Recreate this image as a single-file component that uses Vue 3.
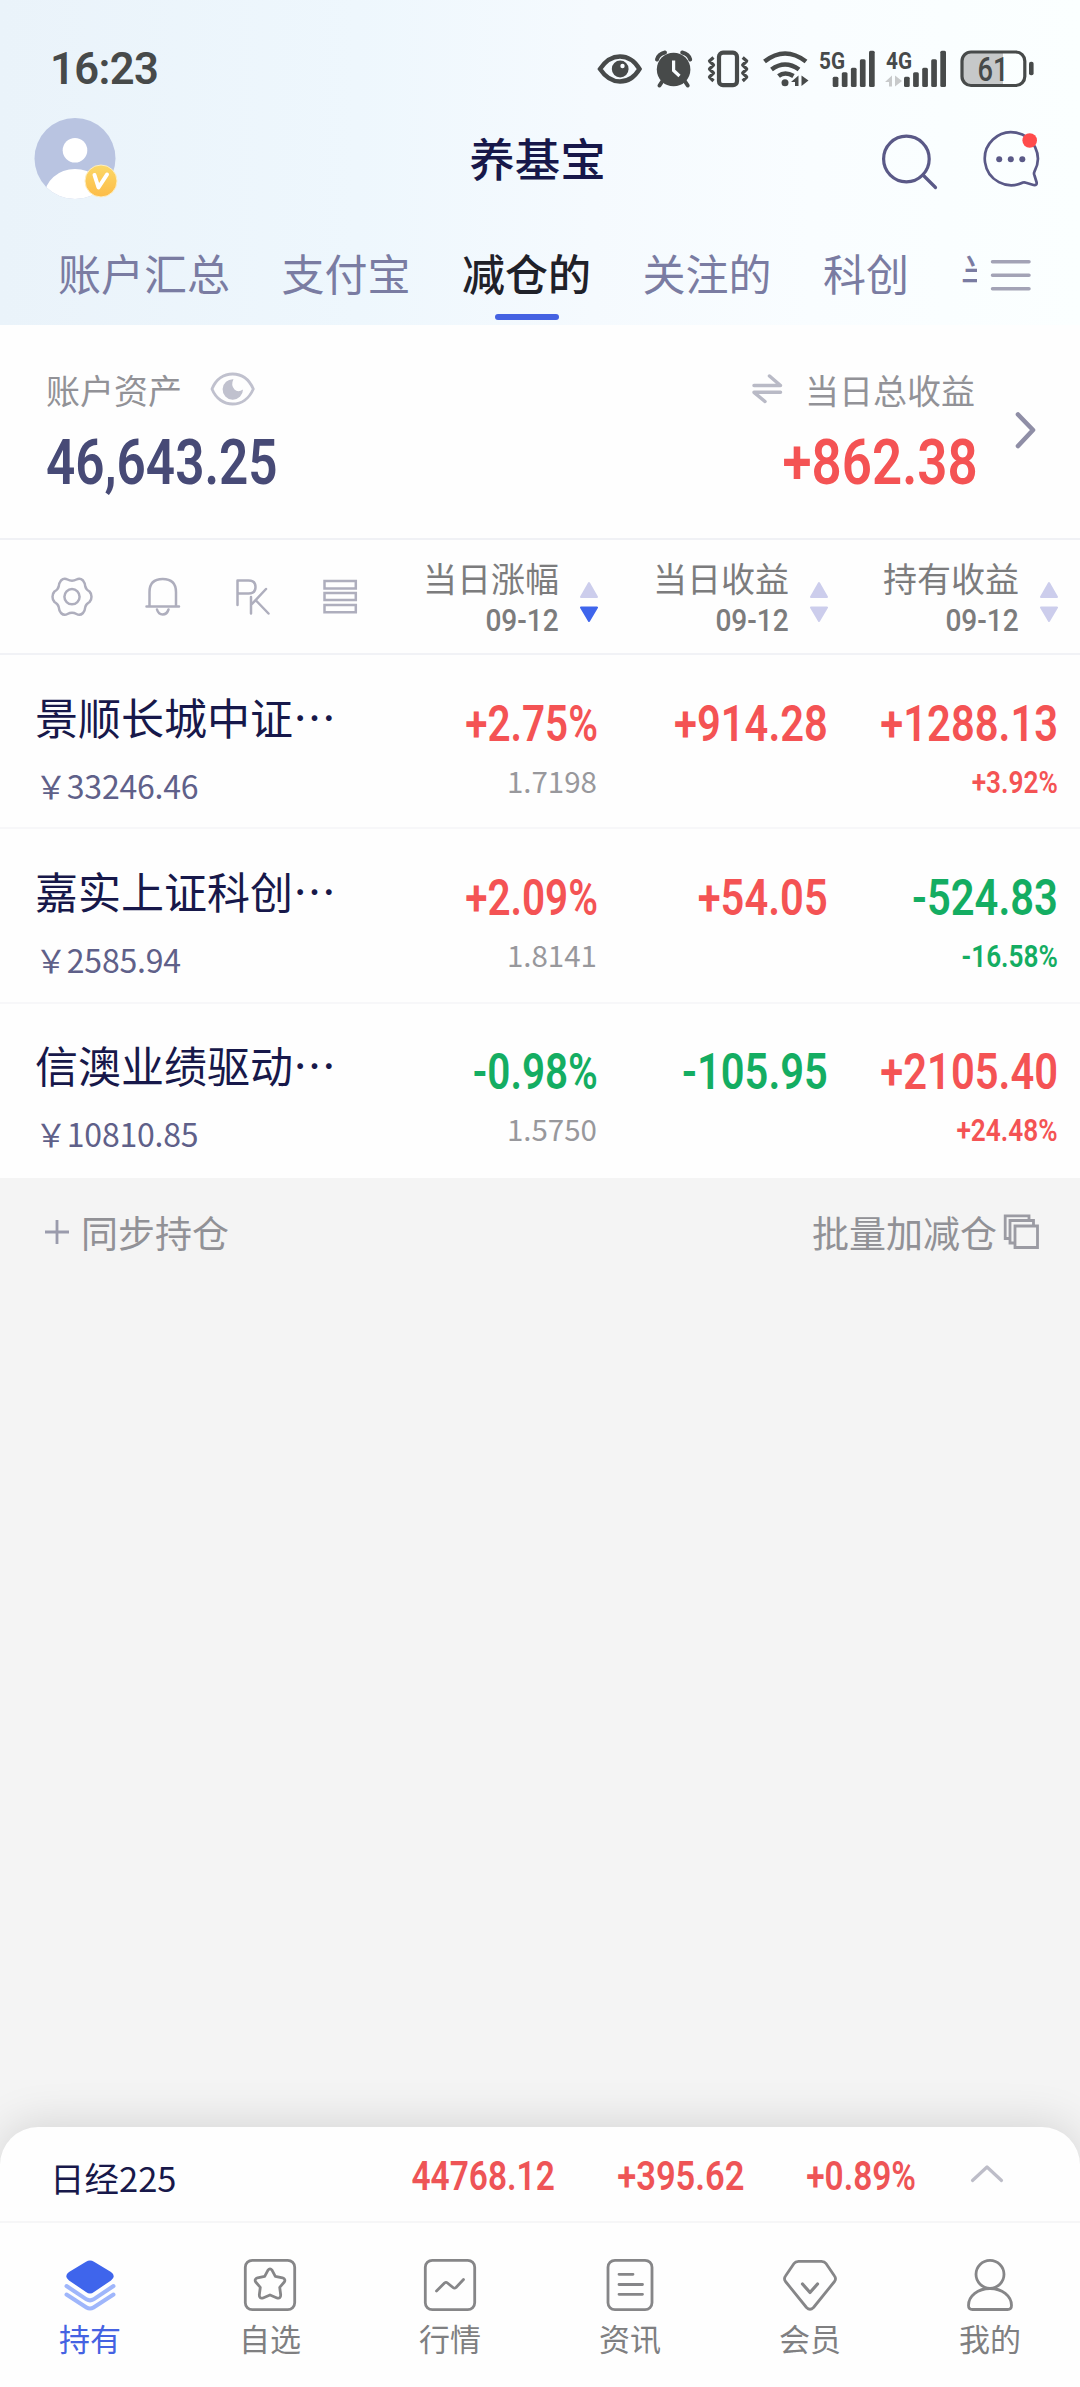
<script setup>
const tabs = ['账户汇总', '支付宝', '减仓的', '关注的', '科创', '半导体']
const activeTab = '减仓的'

const columns = [
  { label: '当日涨幅', date: '09-12', sort: 'desc' },
  { label: '当日收益', date: '09-12', sort: '' },
  { label: '持有收益', date: '09-12', sort: '' },
]

const funds = [
  { name: '景顺长城中证…', amount: '33246.46', rate: '+2.75%', nav: '1.7198', day: '+914.28', total: '+1288.13', totalRate: '+3.92%' },
  { name: '嘉实上证科创…', amount: '2585.94', rate: '+2.09%', nav: '1.8141', day: '+54.05', total: '-524.83', totalRate: '-16.58%' },
  { name: '信澳业绩驱动…', amount: '10810.85', rate: '-0.98%', nav: '1.5750', day: '-105.95', total: '+2105.40', totalRate: '+24.48%' },
]

const tone = (value) => (value.startsWith('-') ? 'down' : 'up')

const navItems = [
  { key: 'hold', label: '持有' },
  { key: 'star', label: '自选' },
  { key: 'market', label: '行情' },
  { key: 'news', label: '资讯' },
  { key: 'vip', label: '会员' },
  { key: 'mine', label: '我的' },
]

const bars = [
  [0, 76.7],
  [9.1, 72.3],
  [18.2, 67.7],
  [27.2, 59.3],
  [36.3, 50.7],
]
</script>

<template>
  <div class="page">
    <header class="top">
      <div class="status">
        <span class="clock">16:23</span>
        <svg class="status-icons" width="444" height="44" viewBox="594 46 444 44" fill="none" stroke="#474a4a">
          <path d="M600 69C606 60 612 56.5 620 56.5S634 60 639.500 69C634 78 628 81.500 620 81.500S606 78 600 69Z" stroke-width="4.400" />
          <circle cx="620.200" cy="69" r="8.400" fill="#474a4a" stroke="none" />
          <circle cx="622.500" cy="66" r="2.200" fill="#f8fcff" stroke="none" />

          <circle cx="673.600" cy="69.500" r="16.800" fill="#474a4a" stroke="none" />
          <path d="M657 59.500Q658.500 54 665 52.500M690.200 59.500Q688.700 54 682.200 52.500M662.500 81L659.500 85.500M684.700 81L687.700 85.500" stroke-width="4" stroke-linecap="round" />
          <path d="M673.600 60.500V70.500L679.500 76" stroke="#f8fcff" stroke-width="3.200" />

          <rect x="719" y="52.700" width="18" height="32.500" rx="4" stroke-width="4.200" />
          <path d="M713.500 57.500L709.500 61L713.500 65L709.500 69L713.500 73L709.500 77L713.500 81M742.700 57.500L746.700 61L742.700 65L746.700 69L742.700 73L746.700 77L742.700 81" stroke-width="3.200" stroke-linejoin="round" />

          <path d="M764.500 61.500Q785 45.500 806 61.500M771.500 69.500Q785 59.500 799 69.500M778.500 76Q785 71 793.500 76" stroke-width="4.600" />
          <circle cx="785" cy="82.700" r="3.500" fill="#474a4a" stroke="none" />
          <path d="M798.500 75.500V86H795V82H791ZM801.500 86V75.500L808.500 80.500Z" fill="#474a4a" stroke="none" />

          <g fill="#474a4a" stroke="none">
            <text x="819" y="68.500" class="net" textLength="26" lengthAdjust="spacingAndGlyphs">5G</text>
            <rect v-for="b in bars" :key="'a' + b[0]" :x="832.7 + b[0]" :y="b[1]" width="5.700" :height="87 - b[1]" rx="1.500" />
            <text x="886" y="68.500" class="net" textLength="26" lengthAdjust="spacingAndGlyphs">4G</text>
            <rect v-for="b in bars" :key="'b' + b[0]" :x="904 + b[0]" :y="b[1]" width="5.700" :height="87 - b[1]" rx="1.500" />
          </g>
          <path d="M892 75.500V86.500H889V82H885ZM895 86.500V75.500L902 81Z" fill="#c8cacb" stroke="none" />

          <path d="M970 52H1003V85.500H970Q962 85.500 962 77V60Q962 52 970 52Z" fill="#c6c8c9" stroke="none" />
          <rect x="962" y="52" width="62.800" height="33.500" rx="9" stroke-width="3.200" />
          <rect x="1029" y="61.700" width="4.600" height="13.600" rx="2" fill="#474a4a" stroke="none" />
          <text x="977.500" y="81" class="batt" fill="#474a4a" stroke="none" textLength="31" lengthAdjust="spacingAndGlyphs">61</text>
        </svg>
      </div>

      <div class="title-bar">
        <svg class="avatar" width="86" height="84" viewBox="34 117 86 84">
          <defs>
            <clipPath id="face"><circle cx="75" cy="158.500" r="40.500" /></clipPath>
            <linearGradient id="gold" x1="0" y1="0" x2="0" y2="1">
              <stop offset="0" stop-color="#fbd867" />
              <stop offset="1" stop-color="#fdbc48" />
            </linearGradient>
          </defs>
          <g clip-path="url(#face)">
            <rect x="34" y="117" width="84" height="84" fill="#b9c4e1" />
            <circle cx="75" cy="150.300" r="12.300" fill="#fff" />
            <ellipse cx="75" cy="196" rx="30.500" ry="27" fill="#fff" />
          </g>
          <circle cx="101" cy="181" r="16" fill="url(#gold)" stroke="#fdeec2" stroke-width="1" />
          <path d="M94.500 175L98.500 187.500L107 174.500" fill="none" stroke="#fff" stroke-width="4" stroke-linecap="round" stroke-linejoin="round" />
        </svg>
        <h1 class="title">养基宝</h1>
        <svg class="actions" width="160" height="64" viewBox="880 126 160 64" fill="none" stroke="#5a5987" stroke-width="3.200" stroke-linecap="round" stroke-linejoin="round">
          <circle cx="906.400" cy="158" r="22.800" />
          <path d="M923 174L935.500 186.500" />
          <path d="M1023 181.500A26.500 26.500 0 1 1 1034.500 170.500Q1033.500 172.500 1034.500 174.500L1036.500 181Q1037.500 184.500 1033.500 184L1026 181.800Q1024.500 181 1023 181.500Z" stroke-width="2.700" />
          <g fill="#5a5987" stroke="none">
            <circle cx="999.200" cy="158.300" r="3" /><circle cx="1010.800" cy="158.300" r="3" /><circle cx="1022.300" cy="158.300" r="3" />
          </g>
          <circle cx="1029.700" cy="139.500" r="7.300" fill="#ff4b4b" stroke="none" />
        </svg>
      </div>

      <nav class="tabs">
        <div class="tab-list">
          <span v-for="t in tabs" :key="t" class="tab" :class="{ active: t === activeTab }">{{ t }}</span>
        </div>
        <svg width="42" height="32" viewBox="990 258 42 32" stroke="#a3a3b6" stroke-width="3.500" stroke-linecap="round">
          <path d="M992.500 260.700H1029M992.500 274.300H1029M992.500 287.700H1029" />
        </svg>
      </nav>
    </header>

    <section class="summary">
      <div class="sum-left">
        <div class="sum-label">
          账户资产
          <svg class="eye" width="46" height="36" viewBox="210 371 46 36" fill="none" stroke="#c0c1ce">
            <path d="M212 389C216 379 224 374 232.600 374S249 379 253.300 389C249 399 241 404 232.600 404S216 399 212 389Z" stroke-width="2.800" />
            <path d="M233.500 379.300A10.200 10.200 0 1 0 243 389.500Q238 393 234.500 389.500Q230.500 385 233.500 379.300Z" fill="#c0c1ce" stroke="none" />
          </svg>
        </div>
        <div class="big assets"><span class="num">46,643.25</span></div>
      </div>
      <div class="sum-right">
        <div class="sum-label profit">
          <svg class="swap" width="32" height="32" viewBox="753 372 32 32" fill="none" stroke="#b9bac6" stroke-width="3.500" stroke-linecap="round" stroke-linejoin="round">
            <path d="M756 384.500H782.500L771.500 375M782.500 391.300H756L767 400.500" />
          </svg>
          当日总收益
        </div>
        <div class="big up"><span class="num wide">+862.38</span></div>
      </div>
      <svg class="chev" width="24" height="40" viewBox="1014 410 24 40" fill="none" stroke="#8f8ea6" stroke-width="4.600" stroke-linecap="round" stroke-linejoin="round">
        <path d="M1018 414.500L1033 430L1018 446" />
      </svg>
    </section>

    <section class="table-head">
      <svg class="tools" width="312" height="44" viewBox="48 575 312 44" fill="none" stroke="#aeaebd" stroke-width="2.500" stroke-linecap="round" stroke-linejoin="round">
        <circle cx="72" cy="596.700" r="7.600" />
        <path d="M61 580.500Q64 577.500 67.500 579.500Q72 582 76.500 579.500Q80 577.500 83 580.500Q85 583 85.300 586.500Q86 589.500 89.500 591.500Q91.500 593.500 91.500 596.700Q91.500 600 89.500 602Q86 604 85.300 607Q85 610.500 83 613Q80 616 76.500 614Q72 611.500 67.500 614Q64 616 61 613Q59 610.500 58.700 607Q58 604 54.500 602Q52.500 600 52.500 596.700Q52.500 593.500 54.500 591.500Q58 589.500 58.700 586.500Q59 583 61 580.500Z" />
        <path d="M146.500 606.500H179M149.500 606V592Q149.500 579 162.700 579T176 592V606M157 609.500Q158.500 614.500 162.700 614.500T168.500 609.500" />
        <path d="M237.500 605V580.500H248.500Q255.500 580.500 255.500 587T248.500 593.500H239M251 597V613.500M266 589L251.500 604.500M256 600.500L268.500 613.500" />
        <path d="M324.500 581H355.800V588.500H324.500ZM324.500 593H355.800V600H324.500ZM324.500 605H355.800V612.300H324.500Z" stroke-linejoin="miter" />
      </svg>
      <div v-for="c in columns" :key="c.label" class="col-head">
        <div class="col-text">
          <span class="col-label">{{ c.label }}</span>
          <span class="num col-date">{{ c.date }}</span>
        </div>
        <svg width="18" height="42" viewBox="0 0 18 42" stroke-width="2" stroke-linejoin="round">
          <path d="M9 2L17 16H1Z" fill="#cccdec" stroke="#cccdec" />
          <path d="M9 40L17 26.500H1Z" :fill="c.sort === 'desc' ? '#3f65ec' : '#cccdec'" :stroke="c.sort === 'desc' ? '#3f65ec' : '#cccdec'" />
        </svg>
      </div>
    </section>

    <section class="funds">
      <article v-for="f in funds" :key="f.name" class="fund">
        <div class="fund-main">
          <span class="fund-name">{{ f.name }}</span>
          <span class="fund-amount">￥{{ f.amount }}</span>
        </div>
        <div class="cell">
          <span class="num val" :class="tone(f.rate)">{{ f.rate }}</span>
          <span class="nav-value">{{ f.nav }}</span>
        </div>
        <div class="cell">
          <span class="num wide val" :class="tone(f.day)">{{ f.day }}</span>
        </div>
        <div class="cell">
          <span class="num wide val" :class="tone(f.total)">{{ f.total }}</span>
          <span class="num wide sub" :class="tone(f.totalRate)">{{ f.totalRate }}</span>
        </div>
      </article>
    </section>

    <section class="batch">
      <span class="batch-item">
        <svg width="26" height="26" viewBox="0 0 26 26" stroke="#9a9bac" stroke-width="2.800"><path d="M1 13H25M13 1V25" /></svg>
        同步持仓
      </span>
      <span class="batch-item right">
        批量加减仓
        <svg width="37" height="36" viewBox="1004 1214 37 36" fill="none" stroke="#9b9ba3" stroke-width="2.800">
          <path d="M1016 1226H1038.500V1247.500H1016ZM1016 1243H1011V1220.500H1034.500V1226M1011 1238.500H1006.200V1215.800H1030V1220.500" />
        </svg>
      </span>
    </section>

    <footer class="dock">
      <div class="index">
        <span class="index-name">日经225</span>
        <span class="quote q1"><span class="num">44768.12</span></span>
        <span class="quote q2"><span class="num wide">+395.62</span></span>
        <span class="quote q3"><span class="num">+0.89%</span></span>
        <svg width="36" height="20" viewBox="0 0 36 20" fill="none" stroke="#bdbdc8" stroke-width="3.200" stroke-linecap="round" stroke-linejoin="round">
          <path d="M3.500 16.500L18 3L32.500 16.500" />
        </svg>
      </div>
      <nav class="bottom-nav">
        <div v-for="n in navItems" :key="n.key" class="nav-item" :class="{ on: n.key === 'hold' }">
          <svg width="56" height="56" viewBox="0 0 56 56" fill="none" stroke="#868688" stroke-width="2.800" stroke-linecap="round" stroke-linejoin="round">
            <template v-if="n.key === 'hold'">
              <path d="M24 4.800Q28 2 32 4.800L49 15Q54.500 19 49 23.500L32 35Q28 38 24 35L7 23.500Q1.500 19 7 15Z" fill="#3f65ec" stroke="none" />
              <path d="M4.500 29L24.500 42.300Q28 44.500 31.500 42.300L51.500 29M4.500 37.500L24.500 50.500Q28 52.700 31.500 50.500L51.500 37.500" stroke="#9fb6fb" stroke-width="4" />
            </template>
            <template v-else-if="n.key === 'star'">
              <rect x="3.300" y="3.300" width="49.400" height="49.400" rx="7" />
              <path d="M26 13.200Q28 10.500 30 13.200L33.300 19.300L40.500 20.800Q44 22 42.300 25L37.700 30.300L38.700 38Q38.700 42 35 41L28 38L21 41Q17.300 42 17.300 38L18.300 30.300L13.700 25Q12 22 15.500 20.800L22.700 19.300Z" />
            </template>
            <template v-else-if="n.key === 'market'">
              <rect x="3.300" y="3.300" width="49.400" height="49.400" rx="7" />
              <path d="M14.500 34L22.500 26Q24 24.800 25.500 26L31 30.500Q32.500 31.800 34 30.500L41.500 22.500" />
            </template>
            <template v-else-if="n.key === 'news'">
              <rect x="6" y="3.300" width="44" height="49.400" rx="7" />
              <path d="M17 17.300H31M17 27.500H40.500M17 37.300H40.500" />
            </template>
            <template v-else-if="n.key === 'vip'">
              <path d="M16.500 4.300H39.500Q42.500 4.300 44 6.500L52.500 19Q54.500 21.800 52.500 24.500L31.500 50.500Q28 54 24.500 50.500L3.500 24.500Q1.500 21.800 3.500 19L12 6.500Q13.500 4.300 16.500 4.300Z" />
              <path d="M20.500 27L28 35.500L35.500 27" stroke-width="3.200" />
            </template>
            <template v-else>
              <circle cx="28" cy="17.300" r="14" />
              <path d="M28 31.500C16 31.500 6.500 39 6.500 48.500Q6.500 52.500 10.500 52.500H45.500Q49.500 52.500 49.500 48.500C49.500 39 40 31.500 28 31.500Z" />
            </template>
          </svg>
          <span>{{ n.label }}</span>
        </div>
      </nav>
    </footer>
  </div>
</template>

<style>
body {
  margin: 0;
}
</style>

<style scoped>
.page {
  display: flex;
  flex-direction: column;
  width: 1080px;
  height: 2387px;
  overflow: hidden;
  background: #f4f4f4;
  font-family: 'Noto Sans CJK SC', sans-serif;
  box-sizing: border-box;
}
.page * {
  box-sizing: border-box;
}
svg {
  display: block;
  flex: none;
}
.num {
  display: inline-block;
  font-family: Roboto, sans-serif;
  font-weight: 600;
  white-space: nowrap;
  transform: scaleX(0.82);
  transform-origin: right center;
}
.num.wide {
  transform: scaleX(0.846);
}
.up {
  color: #f45354;
}
.down {
  color: #14ad62;
}

.top {
  height: 325px;
  background: linear-gradient(90deg, #eaf3fa 0%, #eef7fd 33%, #f5fafe 55%, #f9fdff 75%, #fbffff 100%);
}
.status {
  display: flex;
  justify-content: space-between;
  height: 90px;
  padding: 46px 42px 0 50px;
}
.clock {
  font: 600 43.500px/48px Roboto, sans-serif;
  letter-spacing: -0.600px;
  color: #474a4a;
}
.net {
  font: 700 23.500px Roboto, sans-serif;
}
.batt {
  font: 500 33px Roboto, sans-serif;
}
.title-bar {
  display: grid;
  grid-template-columns: 1fr auto 1fr;
  align-items: center;
  height: 138px;
  padding: 0 40px 0 34px;
}
.title {
  margin: 0 0 4px 1px;
  font-size: 45.500px;
  line-height: 60px;
  font-weight: 500;
  color: #17184a;
}
.actions {
  justify-self: end;
}
.tabs {
  display: flex;
  align-items: center;
  justify-content: space-between;
  height: 97px;
  padding: 0 48px 0 58px;
}
.tabs > svg {
  margin-bottom: 4px;
}
.tab-list {
  display: flex;
  gap: 51.500px;
  width: 919px;
  height: 97px;
  overflow: hidden;
}
.tab {
  flex: none;
  display: flex;
  flex-direction: column;
  align-items: center;
  font-size: 43px;
  line-height: 88px;
  color: #7a7ca2;
}
.tab.active {
  color: #1f2129;
  font-weight: 500;
}
.tab.active::after {
  content: '';
  width: 64px;
  height: 6px;
  margin-top: -2px;
  border-radius: 3px;
  background: #4562e2;
}

.summary {
  display: flex;
  height: 215px;
  padding: 45px 42px 0 46px;
  background: #fefefe;
  border-bottom: 2px solid #f0f1f5;
}
.sum-left {
  flex: 1;
}
.sum-right {
  display: flex;
  flex-direction: column;
  align-items: flex-end;
}
.sum-label {
  display: flex;
  align-items: center;
  height: 40px;
  font-size: 34px;
  line-height: 40px;
  color: #929297;
}
.profit {
  margin-right: 3px;
}
.eye {
  margin: 0 0 2px 28px;
}
.swap {
  margin: 0 22px 3px 0;
}
.big {
  height: 72px;
  margin-top: 11px;
  font-size: 62.500px;
  line-height: 72px;
}
.assets {
  color: #474a76;
}
.assets .num {
  transform-origin: left center;
}
.chev {
  margin: 40px 0 0 36px;
}

.table-head {
  display: grid;
  grid-template-columns: 1fr 230px 230px 230px;
  height: 115px;
  padding: 0 22px 0 48px;
  background: #fefefe;
  border-bottom: 2px solid #f1f2f6;
}
.tools {
  margin-top: 35px;
}
.col-head {
  display: flex;
  justify-content: flex-end;
  gap: 21px;
}
.col-head > svg {
  margin-top: 41px;
}
.col-text {
  display: flex;
  flex-direction: column;
  align-items: flex-end;
  padding-top: 18px;
  color: #7c7c7d;
}
.col-label {
  font-size: 34px;
  line-height: 40px;
}
.col-date {
  margin-top: 3px;
  font-size: 30.500px;
  line-height: 40px;
  font-weight: 500;
  transform: scaleX(0.92);
}

.funds {
  background: #fefefe;
}
.fund {
  display: grid;
  grid-template-columns: 1fr 230px 230px 230px;
  height: 174.300px;
  padding: 0 22px 0 35px;
  border-bottom: 2px solid #f7f7f9;
}
.fund:last-child {
  border-bottom: 0;
}
.fund-main {
  display: flex;
  flex-direction: column;
  padding-top: 30.500px;
  white-space: nowrap;
}
.fund-name {
  font-size: 43px;
  line-height: 60px;
  color: #17184a;
}
.fund-amount {
  margin-top: 19px;
  font-size: 32px;
  line-height: 40px;
  letter-spacing: -0.200px;
  color: #5f6089;
}
.cell {
  display: flex;
  flex-direction: column;
  align-items: flex-end;
  padding-top: 38.500px;
}
.val {
  font-size: 49.300px;
  line-height: 60px;
}
.nav-value {
  margin-top: 6px;
  margin-right: 1px;
  font-size: 29.500px;
  line-height: 40px;
  color: #98989c;
}
.sub {
  margin-top: 9px;
  font-size: 31px;
  line-height: 40px;
}

.batch {
  display: flex;
  justify-content: space-between;
  height: 110px;
  padding: 0 40px 0 44px;
}
.batch-item {
  display: flex;
  align-items: center;
  gap: 11px;
  height: 108px;
  font-size: 37px;
  line-height: 40px;
  color: #919196;
}
.batch-item.right {
  gap: 6px;
}

.dock {
  margin-top: auto;
  height: 260px;
  border-radius: 38px 38px 0 0;
  background: #fefefe;
  box-shadow: 0 -4px 44px rgba(0, 0, 0, 0.13);
}
.index {
  display: flex;
  align-items: center;
  height: 96px;
  padding: 0 75px 0 50px;
  border-bottom: 2px solid #f6f6f7;
}
.index-name {
  flex: 1;
  font-size: 34.500px;
  line-height: 50px;
  color: #17184a;
  padding-top: 5px;
}
.quote {
  display: flex;
  justify-content: flex-end;
  padding-top: 3px;
  font-size: 40.800px;
  line-height: 50px;
  color: #ee5456;
}
.q2 {
  width: 190px;
}
.q3 {
  width: 171px;
}
.index > svg {
  margin-left: 53px;
}
.bottom-nav {
  display: flex;
  padding-top: 34px;
}
.nav-item {
  width: 180px;
  display: flex;
  flex-direction: column;
  align-items: center;
  font-size: 31px;
  line-height: 40px;
  color: #7f7f81;
  gap: 5px;
}
.nav-item.on {
  color: #4562e2;
}
</style>
